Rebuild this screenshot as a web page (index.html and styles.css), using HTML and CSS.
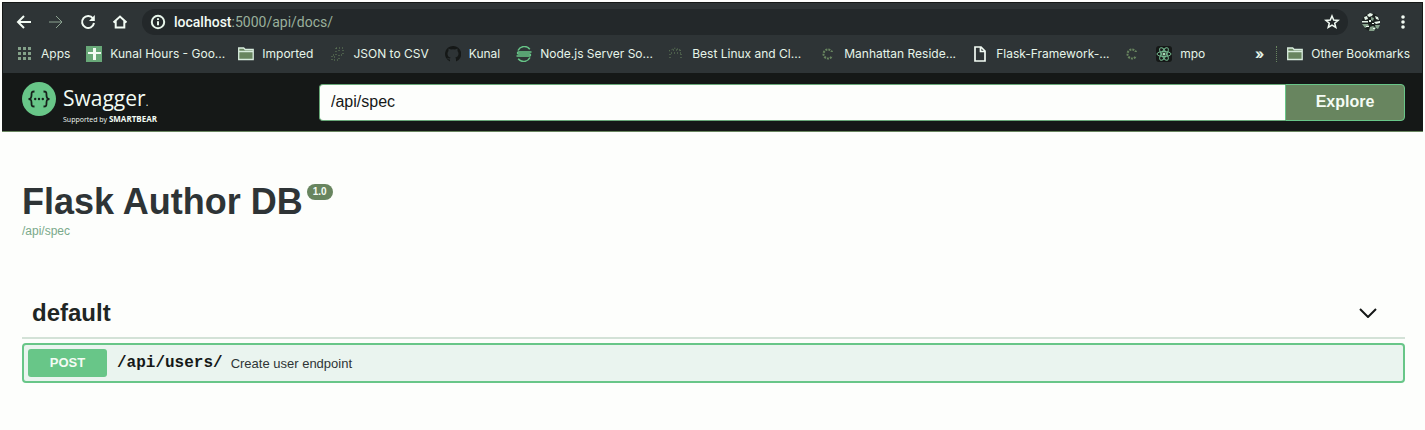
FILE: index.html
```
<!DOCTYPE html>
<html lang="en">
<head>
<meta charset="utf-8">
<title>Flask Author DB</title>
<link rel="stylesheet" href="styles.css">
</head>
<body>
<div class="window">
<header class="browser">
  <div class="toolbar">
    <button class="tool" aria-label="Back"><svg viewBox="0 0 16 16"><path d="M15 8H2M8 2L2 8l6 6"/></svg></button>
    <button class="tool dim" aria-label="Forward"><svg viewBox="0 0 16 16"><path d="M1 8h12M8 2l6 6-6 6"/></svg></button>
    <button class="tool" aria-label="Reload"><svg viewBox="0 0 16 16"><path d="M13 4.500A6 6 0 1 0 14 9"/><path class="solid" d="M14.800 1v6H9z"/></svg></button>
    <button class="tool" aria-label="Home"><svg viewBox="0 0 16 16"><path d="M1.500 8.500L8 2.500l6.500 6M3.700 7v6.500h8.600V7"/></svg></button>
    <div class="address">
      <svg class="info" viewBox="0 0 16 16"><circle cx="8" cy="8" r="6.200"/><path d="M8 7.200v4M8 4.300v1.600"/></svg>
      <span class="url"><b>localhost</b>:5000/api/docs/</span>
      <button class="star" aria-label="Bookmark this page"><svg viewBox="0 0 16 16"><path d="M8 2l1.700 4.100 4.400.3-3.400 2.800 1.100 4.300L8 11.200l-3.800 2.300 1.100-4.300-3.400-2.800 4.400-.3z"/></svg></button>
    </div>
    <button class="avatar" aria-label="Profile"><svg viewBox="0 0 20 20"><circle cx="10" cy="10" r="9" fill="#1c2220"/><path fill="#e6f4e9" d="M6 3l3-2 3 1-1 2-3 1zM3 5l3-1 1 3-3 1zM1 9h6v1.500H1zM14 4l3 1 1 3-3-1zM13 10l6-1v2l-4 1zM8 8h2v2H8z"/><path fill="#84a18a" d="M1 12h6l1 2-4 2zM9 15l3-1 3 2-2 3H8zM14 13h5l-2 4-2-1zM10 5l3 1-1 3-2-1z"/><path fill="#eef8f0" d="M5 14h3v1H5zM12 16h2v1h-2zM11 11h2v1h-2z"/></svg></button>
    <button class="dots" aria-label="Menu"><svg viewBox="0 0 4 16"><circle cx="2" cy="3" r="1.800"/><circle cx="2" cy="8" r="1.800"/><circle cx="2" cy="13" r="1.800"/></svg></button>
  </div>
  <nav class="bookmarks" aria-label="Bookmarks">
    <a class="mark" href="#"><svg viewBox="0 0 16 16"><path fill="#84a18a" d="M1 1h3v3H1zM6 1h3v3H6zM11 1h3v3h-3zM1 6h3v3H1zM6 6h3v3H6zM11 6h3v3h-3zM1 11h3v3H1zM6 11h3v3H6zM11 11h3v3h-3z"/></svg>Apps</a>
    <a class="mark long" href="#"><svg viewBox="0 0 16 16"><path fill="#68a878" d="M0 0h16v16H0z"/><path fill="#f2fbf4" d="M7 2h3v4h5v2h-5v6H7V8H2V6h5z"/></svg>Kunal Hours - Goo...</a>
    <a class="mark" href="#"><svg viewBox="0 0 16 16"><path fill="#68855f" stroke="#d8ecdd" stroke-width="1.300" d="M.7 2h5l1.500 1.500h8v10H.7zM.7 5.500h14.600"/></svg>Imported</a>
    <a class="mark" href="#"><svg viewBox="0 0 16 16"><path fill="none" stroke="#68855f" stroke-dasharray="1 2" d="M7 2h7v7h-4v5H3V9h4zM10 4v3M5 11h3"/></svg>JSON to CSV</a>
    <a class="mark" href="#"><svg viewBox="0 0 16 16"><path fill="#151817" d="M8 0a8 8 0 0 0-3 15.400v-2c-2 .3-2.500-1-3-1.700 1.200-.2 1.600 1.200 3 .8l.5-1C3 11 2.500 9 2.500 7.500c0-1 .4-2 1-2.600V2.500l2.500 1a8 8 0 0 1 4 0l2.500-1v2.400c.6.7 1 1.600 1 2.600 0 2-1 3.700-3.200 4 .6.600.7 1.300.7 2v2A8 8 0 0 0 8 0z"/></svg>Kunal</a>
    <a class="mark long" href="#"><svg viewBox="0 0 16 16"><path fill="none" stroke="#68c688" stroke-width="1.500" d="M13.800 3.200A7 7 0 0 0 2 4.500M2.200 12.800A7 7 0 0 0 14 11.500M15.500 6H2.500a1 1 0 0 0 0 2h11a1 1 0 0 1 0 2H.5"/></svg>Node.js Server So...</a>
    <a class="mark long" href="#"><svg viewBox="0 0 16 16"><path fill="none" stroke="#68855f" stroke-dasharray="1 2" d="M1 5l6-3 7 3M3 7h11M2 8v6M13 8v6M5 4h8"/></svg>Best Linux and Cl...</a>
    <a class="mark long" href="#"><svg viewBox="0 0 16 16"><circle cx="8" cy="8" r="4.500" fill="none" stroke="#68855f" stroke-width="2" stroke-dasharray="2 1"/><path fill="#2e3436" d="M9 6h5v4H9z"/></svg>Manhattan Reside...</a>
    <a class="mark long" href="#"><svg viewBox="0 0 16 16"><path fill="none" stroke="#f2fbf4" stroke-width="1.700" d="M3 1h6l4 4v10H3zM8.500 1v4.500H13"/></svg>Flask-Framework-...</a>
    <a class="mark" href="#" aria-label="Bookmark"><svg viewBox="0 0 16 16"><circle cx="8" cy="8" r="4.500" fill="none" stroke="#68855f" stroke-width="2" stroke-dasharray="2 1"/><path fill="#2e3436" d="M9 6h5v4H9z"/></svg></a>
    <a class="mark" href="#"><svg viewBox="0 0 16 16"><rect width="16" height="16" rx="3" fill="#151817"/><g fill="none" stroke="#74b890"><ellipse cx="8" cy="8" rx="7" ry="2.600"/><ellipse cx="8" cy="8" rx="7" ry="2.600" transform="rotate(60 8 8)"/><ellipse cx="8" cy="8" rx="7" ry="2.600" transform="rotate(120 8 8)"/></g><circle cx="8" cy="8" r="1.500" fill="#a8dcb8"/></svg>mpo</a>
    <button class="more" aria-label="More bookmarks">»</button>
    <a class="mark other" href="#"><svg viewBox="0 0 16 16"><path fill="#68855f" stroke="#d8ecdd" stroke-width="1.300" d="M.7 2h5l1.500 1.500h8v10H.7zM.7 5.500h14.600"/></svg>Other Bookmarks</a>
  </nav>
</header>
<div class="topbar">
  <a class="logo" href="#" aria-label="Swagger">
    <svg class="badge" viewBox="0 0 34 34"><circle cx="17" cy="17" r="17" fill="#68c688"/><path fill="none" stroke="#17211b" stroke-width="1.800" d="M12.500 9.500c-3 0-3 1-3 3.700S9 17 6.500 17c2.500 0 3 1 3 3.800s0 3.700 3 3.700M21.500 9.500c3 0 3 1 3 3.700S25 17 27.500 17c-2.500 0-3 1-3 3.800s0 3.700-3 3.700"/><g fill="#17211b"><circle cx="13.200" cy="17" r="1.200"/><circle cx="17" cy="17" r="1.200"/><circle cx="20.800" cy="17" r="1.200"/></g></svg>
    <span class="brand"><span class="name">Swagger<small>.</small></span><span class="support">Supported by <b>SMARTBEAR</b></span></span>
  </a>
  <form class="explore">
    <input type="text" value="/api/spec" aria-label="API specification URL">
    <button type="button">Explore</button>
  </form>
</div>
<main class="content">
  <h1>Flask Author DB<span class="version">1.0</span></h1>
  <a class="spec" href="#">/api/spec</a>
  <section class="group">
    <div class="group-head">
      <h2>default</h2>
      <button aria-label="Collapse default"><svg viewBox="0 0 18 10"><path d="M1 1l8 8 8-8"/></svg></button>
    </div>
    <button class="operation"><span class="method">POST</span><span class="path">/api/users/</span><span class="summary">Create user endpoint</span></button>
  </section>
</main>
</div>
</body>
</html>
```
FILE: styles.css
```
* { box-sizing: border-box; }
body { margin: 0; background: #fdfefc; font-family: "Liberation Sans", Arial, sans-serif; color: #2e3436; }
button { margin: 0; padding: 0; border: 0; background: none; color: inherit; font: inherit; }
a { color: inherit; text-decoration: none; }
svg { display: block; flex: none; }
.window { margin: 2px 2px 0; }
.browser { background: #2e3436; border: 1px solid #151817; border-bottom: 0; color: #e6f4e9; }
.toolbar { display: flex; align-items: center; height: 38px; padding: 0 17px 0 13px; }
.tool { margin-right: 16px; }
.tool svg, .star svg { width: 16px; height: 16px; fill: none; stroke: #f2fbf4; stroke-width: 2; }
.tool.dim svg { stroke: #8ca391; stroke-width: 1px; }
.tool .solid { fill: #f2fbf4; stroke: none; }
.tool:nth-child(4) { margin-right: 14px; }
.address { flex: 1; display: flex; align-items: center; height: 26px; padding: 0 8px; border-radius: 13px; background: #23282a; }
.info { width: 16px; height: 16px; fill: none; stroke: #e6f4e9; stroke-width: 2; }
.url { flex: 1; margin-left: 8px; font: 14px/20px Roboto, sans-serif; color: #9ab09c; }
.url b { font-weight: 500; color: #f2fbf4; }
.star svg { stroke-width: 1.500; }
.avatar { margin-left: 13px; }
.avatar svg { width: 20px; height: 20px; }
.dots { margin-left: 20px; }
.dots svg { width: 4px; height: 16px; fill: #f2fbf4; }
.bookmarks { display: flex; align-items: center; gap: 16px; height: 32px; padding: 0 12px 6px 14px; font: 400 12px/16px Inter, sans-serif; white-space: nowrap; }
.mark { display: flex; align-items: center; gap: 8px; }
.mark svg { width: 16px; height: 16px; }
.mark.long { width: 136px; }
.more { margin-left: auto; margin-right: -4px; font-size: 14px; font-weight: 700; }
.other { border-left: 1px dotted #68855f; padding-left: 10px; }
.topbar { display: flex; align-items: center; height: 59px; padding: 0 18px 0 20px; background: #151817; border-bottom: 1px solid #68855f; }
.logo { flex: none; display: flex; gap: 7px; width: 297px; height: 40px; color: #f2fbf4; font-family: "Open Sans", sans-serif; }
.badge { width: 34px; height: 34px; }
.brand { display: flex; flex-direction: column; padding-top: 4px; }
.name { font-size: 21px; line-height: 24px; }
.name small { font-size: 10px; }
.support { font-size: 7px; line-height: 10px; white-space: nowrap; }
.support b { font-size: 8px; }
.explore { flex: 1; display: flex; height: 37px; }
.explore input { flex: 1; min-width: 0; padding: 0 11px; border: 1px solid #68a878; border-right: 0; border-radius: 4px 0 0 4px; background: #fdfefc; color: #151817; font: 16px "Liberation Sans", Arial, sans-serif; }
.explore button { width: 120px; border: 1px solid #68c688; border-radius: 0 4px 4px 0; background: #68855f; color: #f4fbf4; font-size: 16px; font-weight: 700; }
.content { padding: 49px 18px 0 20px; }
h1 { display: flex; align-items: flex-start; margin: 0; font-size: 36px; line-height: 42px; }
.version { margin: 3px 0 0 4px; padding: 0 6px; border-radius: 8px; background: #68855f; color: #f4fbf4; font-size: 10px; line-height: 16px; }
.spec { display: block; font-size: 12px; line-height: 16px; color: #7aa98a; }
.group { margin-top: 50px; }
.group-head { display: flex; align-items: center; justify-content: space-between; height: 50px; padding: 0 28px 0 10px; border-bottom: 2px solid #d3e2d7; }
h2 { margin: 0; color: #1f2624; font-size: 24px; line-height: 28px; }
.group-head svg { width: 18px; height: 10px; fill: none; stroke: #151817; stroke-width: 2; }
.operation { display: flex; align-items: center; width: 100%; height: 40px; margin-top: 4px; padding: 0 4px; border: 2px solid #68c688; border-radius: 4px; background: #eaf4ef; text-align: left; }
.method { width: 79px; border-radius: 3px; background: #68c688; color: #f4fbf4; font-size: 13px; font-weight: 700; line-height: 28px; text-align: center; }
.path { margin: 0 8px 0 10px; color: #151817; font: 700 16px "Liberation Mono", monospace; }
.summary { font-size: 13px; }
```
